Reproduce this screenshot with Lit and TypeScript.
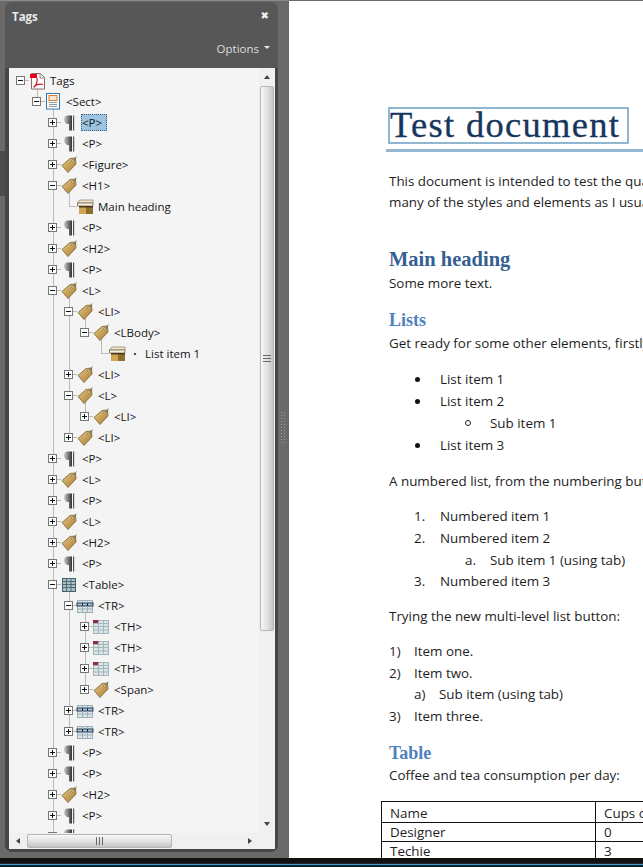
import { LitElement, html, css, svg } from "lit";
import { customElement } from "lit/decorators.js";

type Kind = "pdf" | "sect" | "para" | "tag" | "box" | "table" | "tr" | "th";
interface Node { label: string; icon: Kind; open?: boolean; leaf?: boolean; bullet?: boolean; selected?: boolean; kids?: Node[]; }

const P = (selected = false): Node => ({ label: "<P>", icon: "para", selected });
const T = (label: string, kids?: Node[]): Node => ({ label, icon: "tag", open: !!kids, kids });
const TH = (): Node => ({ label: "<TH>", icon: "th" });
const TR = (kids?: Node[]): Node => ({ label: "<TR>", icon: "tr", open: !!kids, kids });

const TREE: Node = {
  label: "Tags", icon: "pdf", open: true, kids: [{
    label: "<Sect>", icon: "sect", open: true, kids: [
      P(true), P(), T("<Figure>"),
      T("<H1>", [{ label: "Main heading", icon: "box", leaf: true }]),
      P(), T("<H2>"), P(),
      T("<L>", [
        T("<LI>", [T("<LBody>", [{ label: "List item 1", icon: "box", leaf: true, bullet: true }])]),
        T("<LI>"),
        T("<L>", [T("<LI>")]),
        T("<LI>"),
      ]),
      P(), T("<L>"), P(), T("<L>"), T("<H2>"), P(),
      { label: "<Table>", icon: "table", open: true, kids: [
        TR([TH(), TH(), TH(), T("<Span>")]), TR(), TR(),
      ] },
      P(), P(), T("<H2>"), P(), P(),
    ],
  }],
};

interface Row { node: Node; guides: boolean[]; last: boolean; depth: number; }
function flatten(n: Node, guides: boolean[], last: boolean, depth: number, out: Row[]) {
  out.push({ node: n, guides, last, depth });
  const kids = n.kids ?? [];
  kids.forEach((k, i) => flatten(k, [...guides, !last], i === kids.length - 1, depth + 1, out));
  return out;
}
const ROWS = flatten(TREE, [], true, 0, []);

function icon(k: Kind) {
  switch (k) {
    case "pdf": return svg`<svg class="ic" viewBox="0 0 18 18" width="18" height="18">
      <path d="M3.500 1.500h9l4 4v11.500h-13z" fill="#fff" stroke="#8a6a6a"/><path d="M12 1.500v4.500h4.500" fill="#eee" stroke="#a08888"/>
      <path d="M5.500 15.500c2.500-2 4-6 3.500-9.500M6 14.500c3-2 6-3 9-2" fill="none" stroke="#c8242c" stroke-width="1.200"/>
      <rect x="2" y="2" width="7" height="4" fill="#e8001c"/></svg>`;
    case "sect": return svg`<svg class="ic" viewBox="0 0 18 18" width="18" height="18">
      <rect x="2.500" y=".5" width="13" height="15.500" fill="#fdfdfd" stroke="#2f78ad"/>
      <rect x="5" y="2.500" width="8" height="5" fill="#f7e7cf" stroke="#d9822b"/>
      <path d="M5 9.500h8M5 11.500h8M5 13.500h8" stroke="#9a9a9a"/></svg>`;
    case "para": return svg`<svg class="ic" viewBox="0 0 18 18" width="18" height="18">
      <defs><linearGradient id="pg" x1="0" x2="1"><stop offset="0" stop-color="#cdcdcd"/><stop offset="1" stop-color="#333"/></linearGradient></defs>
      <path d="M12 1.500H8C5 1.500 4 3.500 4 5.500s1.500 4.500 4 4.500h1v6.500h3z" fill="url(#pg)"/><rect x="13" y="1.500" width="1.200" height="15" fill="#555"/></svg>`;
    case "tag": return svg`<svg class="ic" viewBox="0 0 18 18" width="18" height="18">
      <defs><linearGradient id="tg" x1="0" y1="0" x2="1" y2="1"><stop offset="0" stop-color="#e8c987"/><stop offset="1" stop-color="#a67a2e"/></linearGradient></defs>
      <path d="M2 9.500 10 2.500l5.500-.5.500 6-8 8.500z" fill="url(#tg)" stroke="#7b6232" stroke-width=".8"/>
      <circle cx="13" cy="5" r="1.200" fill="#fff" stroke="#6a5228" stroke-width=".6"/><path d="M13.500 4.500 16.500 .5" stroke="#555" stroke-width=".7"/></svg>`;
    case "box": return svg`<svg class="ic" viewBox="0 0 18 18" width="18" height="18">
      <path d="M1.500 5 4 2h13v3z" fill="#efe6d0" stroke="#8a7d60" stroke-width=".7"/>
      <path d="M1.500 5H17v3H1.500z" fill="#f4efe0" stroke="#6a5a3c" stroke-width=".7"/>
      <path d="M3 8h14v8H3z" fill="#cfa653"/><path d="M10 8h7v8h-7z" fill="#8f6e2a"/><path d="M3 8h14v1.500H3z" fill="#4a3a18"/></svg>`;
    case "table": return svg`<svg class="ic" viewBox="0 0 18 18" width="18" height="18">
      <rect x="2.500" y="2.500" width="13" height="13" fill="#a9c2c9" stroke="#48606a"/>
      <path d="M2.500 5.500h13M2.500 8.500h13M2.500 11.500h13M6.500 2.500v13M11 2.500v13" stroke="#48606a" stroke-width=".9"/></svg>`;
    case "tr": return svg`<svg class="ic" viewBox="0 0 18 18" width="18" height="18">
      <rect x="1.500" y="3.500" width="15" height="12" fill="#d8e6ea" stroke="#9eb0b5"/>
      <rect x="1" y="6" width="16" height="3" fill="#a7c2dc" stroke="#1a2a3f" stroke-width=".9"/>
      <path d="M1.500 12h15M6.500 3.500v12M11.500 3.500v12" stroke="#9eb0b5"/><path d="M6.500 6v3M11.500 6v3" stroke="#1a2a3f"/></svg>`;
    case "th": return svg`<svg class="ic" viewBox="0 0 18 18" width="18" height="18">
      <rect x="1.500" y="2.500" width="15" height="13" fill="#d8e6ea" stroke="#a5b4b8"/>
      <rect x="1" y="2" width="6" height="3.500" fill="#8e2b45"/>
      <path d="M1.500 5.500h15M1.500 8.500h15M1.500 12h15M6.500 2.500v13M11.500 2.500v13" stroke="#a5b4b8"/></svg>`;
  }
}

@customElement("app-root")
export class AppRoot extends LitElement {
  static styles = css`
    :host { display: block; width: 643px; height: 867px; overflow: hidden; background: #6a6a6a; font-family: "Open Sans", "Noto Sans", sans-serif; }
    .main { display: flex; height: 858px; }
    .side { width: 289px; flex: none; display: flex; box-sizing: border-box; padding: 1px 0 6px 5px; border-top: 1px solid #8a8a8a;
      background: linear-gradient(90deg, #4c4c4c 0 5px, transparent 5px) 0 150px / 100% 45px no-repeat, #6a6a6a; }
    .panel { flex: 1; min-width: 0; display: flex; flex-direction: column; border-radius: 7px; padding: 0 3px 3px 4px;
      background: linear-gradient(#575757 0 66px, #464646 66px); }
    .gutter { width: 11px; flex: none; display: flex; align-items: center; justify-content: center; }
    .gutter i { display: block; width: 6px; height: 32px; margin: 0 1px 0 0; background: radial-gradient(circle, #9a9a9a 0 .6px, transparent 1px) 0 0 / 3px 3px; }
    .head { height: 28px; flex: none; display: flex; align-items: center; justify-content: space-between; color: #e8e8e8; font-size: 11.500px; font-weight: 700; padding: 0 6px 0 3px; box-sizing: border-box; }
    .x { font-size: 10px; color: #f2f2f2; font-family: "DejaVu Sans", sans-serif; line-height: 1; }
    .opts { height: 38px; flex: none; box-sizing: border-box; display: flex; justify-content: flex-end; align-items: center; color: #dcdcdc; font-size: 11.500px; gap: 5px; padding: 0 5px 2px; }
    .caret { width: 0; height: 0; border: 3px solid transparent; border-top: 3px solid #e8e8e8; border-bottom: 0; margin-bottom: 2px; }
    .body { flex: 1; min-height: 0; display: grid; grid-template-columns: minmax(0, 1fr) 16px; grid-template-rows: minmax(0, 1fr) 16px; background: #f4f4f4; }
    .tree { overflow: hidden; padding-top: 2px; font-size: 11.500px; color: #151515; }
    .row { height: 21px; display: flex; align-items: stretch; padding-left: 4px; white-space: nowrap; }
    .cell { width: 16px; flex: none; position: relative; }
    .cell.v::before, .cell.t::before, .cell.c::before { content: ""; position: absolute; left: 8px; top: 0; bottom: 0; border-left: 1px solid #bbb; }
    .cell.c::before { bottom: 10px; }
    .cell.h::after, .cell.c::after, .cell.t::after { content: ""; position: absolute; left: 8px; right: 0; top: 10px; border-top: 1px solid #bbb; }
    .tog { position: absolute; z-index: 1; left: 3px; top: 6px; width: 9px; height: 9px; box-sizing: border-box; border: 1px solid #777; background: #fdfdfd; }
    .tog::before { content: ""; position: absolute; left: 1px; right: 1px; top: 3px; height: 1px; background: #111; }
    .tog.plus::after { content: ""; position: absolute; top: 1px; bottom: 1px; left: 3px; width: 1px; background: #111; }
    .icw { width: 16px; flex: none; display: flex; align-items: center; justify-content: center; position: relative; }
    .icw.down::before { content: ""; position: absolute; left: 8px; top: 50%; bottom: 0; border-left: 1px solid #bbb; }
    .ic { display: block; flex: none; position: relative; }
    .lab { margin-left: 4px; padding: 0 4px 0 0; align-self: center; height: 17px; line-height: 15px; box-sizing: border-box; border: 1px solid transparent; }
    .lab.sel { background: #9ec4e2; border: 1px dotted #3d5f7d; color: #0d1a26; }
    .bul { margin-left: 4px; width: 12px; text-align: center; align-self: center; line-height: 15px; font-weight: 700; }
    .bul + .lab { margin-left: 3px; }
    .sb { background: #f0f0f0; display: flex; flex-direction: column; align-items: center; }
    .vs { justify-content: space-between; }
    .arrow { flex: none; height: 18px; width: 100%; display: flex; align-items: center; justify-content: center; }
    .up { width: 0; height: 0; border: 3.500px solid transparent; border-bottom: 4px solid #444; border-top: 0; }
    .dn { width: 0; height: 0; border: 3.500px solid transparent; border-top: 4px solid #444; border-bottom: 0; }
    .lt { width: 0; height: 0; border: 3.500px solid transparent; border-right: 4px solid #444; border-left: 0; }
    .rt { width: 0; height: 0; border: 3.500px solid transparent; border-left: 4px solid #444; border-right: 0; }
    .vtrack { flex: 1; width: 100%; min-height: 0; }
    .vthumb { height: 545px; margin: 0 1px; box-sizing: border-box; border: 1px solid #b6b6b6; border-radius: 2px; background: linear-gradient(90deg, #f8f8f8, #e0e0e0 55%, #c4c4c4); display: flex; align-items: center; justify-content: center; }
    .grv { width: 8px; height: 8px; background: repeating-linear-gradient(#666 0 1px, transparent 1px 3px); }
    .hs { flex-direction: row; }
    .hs .arrow { width: 18px; height: 100%; }
    .htrack { flex: 1; height: 100%; }
    .hthumb { width: 145px; height: 14px; margin-top: 1px; box-sizing: border-box; border: 1px solid #b6b6b6; border-radius: 2px; background: linear-gradient(#f8f8f8, #e0e0e0 55%, #c4c4c4); display: flex; align-items: center; justify-content: center; }
    .hgr { width: 7px; height: 8px; background: repeating-linear-gradient(90deg, #666 0 1px, transparent 1px 3px); }
    .corner { background: #f0f0f0; }
    .doc { flex: 1; min-width: 0; background: #fff; overflow: hidden; padding: 106px 0 0 100px; box-sizing: border-box; border-top: 1px solid #6a6a6a; color: #1e1e1e; font-size: 13.400px; line-height: 21px; white-space: nowrap; }
    .title { width: 241px; height: 37px; box-sizing: border-box; border: 2px solid #8fb6d2; margin-left: -1px; font: 36.500px/31px "Liberation Serif", serif; color: #17365d; letter-spacing: 1.300px; -webkit-text-stroke: .3px #17365d; }
    .rule { height: 3px; background: #95b8d5; margin: 5px 0 0 -3px; }
    p { margin: 0; }
    .intro { margin-top: 19px; }
    h2 { margin: 33px 0 0; padding-bottom: 1px; font: 700 20.500px/26px "Liberation Serif", serif; color: #365f91; }
    h3 { margin: 14px 0 0; padding-bottom: 1px; font: 700 18px/24px "Liberation Serif", serif; color: #4f81bd; }
    h3.tight { padding-bottom: 0; }
    ul, ol { list-style: none; margin: 14px 0 0; padding: 0; }
    .after { margin-top: 15px; }
    .after.t { margin-top: 13px; }
    .li { display: flex; padding-left: 25px; height: 21.670px; align-items: center; }
    ul .li { height: 22px; }
    .li .m { width: 26px; flex: none; }
    .l2 { padding-left: 76px; }
    .l2 .m { width: 25px; }
    .flush { padding-left: 0; }
    .flush .m { width: 25px; }
    .flush.l2 { padding-left: 25px; }
    .dot { width: 5px; height: 5px; border-radius: 50%; background: #111; margin: 0 20px 0 1px; flex: none; }
    .ring { width: 6px; height: 6px; border-radius: 50%; border: 1px solid #222; box-sizing: border-box; margin: 0 19px 0 0; flex: none; }
    table { border-collapse: collapse; margin: 15px 0 0 -8px; width: 500px; table-layout: fixed; }
    td { border: 1px solid #111; padding: 0 8px; height: 18px; line-height: 18px; }
    tr:first-child td { height: 20px; padding-top: 2px; box-sizing: content-box; height: 18px; }
    td:first-child { width: 197px; }
    .bar { height: 9px; background: linear-gradient(#111 0 5px, #1c2630 5px 6px, #3fa0d0 6px 7px, #0c2230 7px); }
  `;

  private row(r: Row) {
    const n = r.node;
    const own = r.depth === 0 ? "h" : r.last ? "c" : "t";
    return html`<div class="row">
      ${r.guides.map((g) => html`<span class="cell ${g ? "v" : ""}"></span>`)}
      <span class="cell ${own}">${n.leaf ? null : html`<i class="tog ${n.open ? "" : "plus"}"></i>`}</span>
      <span class="icw ${n.open ? "down" : ""}">${icon(n.icon)}</span>
      ${n.bullet ? html`<span class="bul">·</span>` : null}
      <span class="lab ${n.selected ? "sel" : ""}">${n.label}</span>
    </div>`;
  }

  render() {
    return html`
      <div class="main">
        <div class="side">
          <div class="panel">
            <div class="head"><span>Tags</span><span class="x">✖</span></div>
            <div class="opts"><span>Options</span><i class="caret"></i></div>
            <div class="body">
              <div class="tree">${ROWS.map((r) => this.row(r))}</div>
              <div class="sb vs">
                <div class="arrow"><i class="up"></i></div>
                <div class="vtrack"><div class="vthumb"><i class="grv"></i></div></div>
                <div class="arrow"><i class="dn"></i></div>
              </div>
              <div class="sb hs">
                <div class="arrow"><i class="lt"></i></div>
                <div class="htrack"><div class="hthumb"><i class="hgr"></i></div></div>
                <div class="arrow"><i class="rt"></i></div>
              </div>
              <div class="corner"></div>
            </div>
          </div>
          <div class="gutter"><i></i></div>
        </div>
        <div class="doc">
          <div class="title">Test document</div>
          <div class="rule"></div>
          <p class="intro">This document is intended to test the quality of the conversion</p>
          <p>many of the styles and elements as I usually use in my writing</p>
          <h2>Main heading</h2>
          <p>Some more text.</p>
          <h3>Lists</h3>
          <p>Get ready for some other elements, firstly some lists</p>
          <ul>
            <li class="li"><i class="dot"></i>List item 1</li>
            <li class="li"><i class="dot"></i>List item 2</li>
            <li class="li l2"><i class="ring"></i>Sub item 1</li>
            <li class="li"><i class="dot"></i>List item 3</li>
          </ul>
          <p class="after">A numbered list, from the numbering button</p>
          <ol>
            <li class="li"><span class="m">1.</span>Numbered item 1</li>
            <li class="li"><span class="m">2.</span>Numbered item 2</li>
            <li class="li l2"><span class="m">a.</span>Sub item 1 (using tab)</li>
            <li class="li"><span class="m">3.</span>Numbered item 3</li>
          </ol>
          <p class="after t">Trying the new multi-level list button:</p>
          <ol>
            <li class="li flush"><span class="m">1)</span>Item one.</li>
            <li class="li flush"><span class="m">2)</span>Item two.</li>
            <li class="li flush l2"><span class="m">a)</span>Sub item (using tab)</li>
            <li class="li flush"><span class="m">3)</span>Item three.</li>
          </ol>
          <h3 class="tight">Table</h3>
          <p>Coffee and tea consumption per day:</p>
          <table>
            <tr><td>Name</td><td>Cups of coffee per day</td></tr>
            <tr><td>Designer</td><td>0</td></tr>
            <tr><td>Techie</td><td>3</td></tr>
          </table>
        </div>
      </div>
      <div class="bar"></div>
    `;
  }
}
